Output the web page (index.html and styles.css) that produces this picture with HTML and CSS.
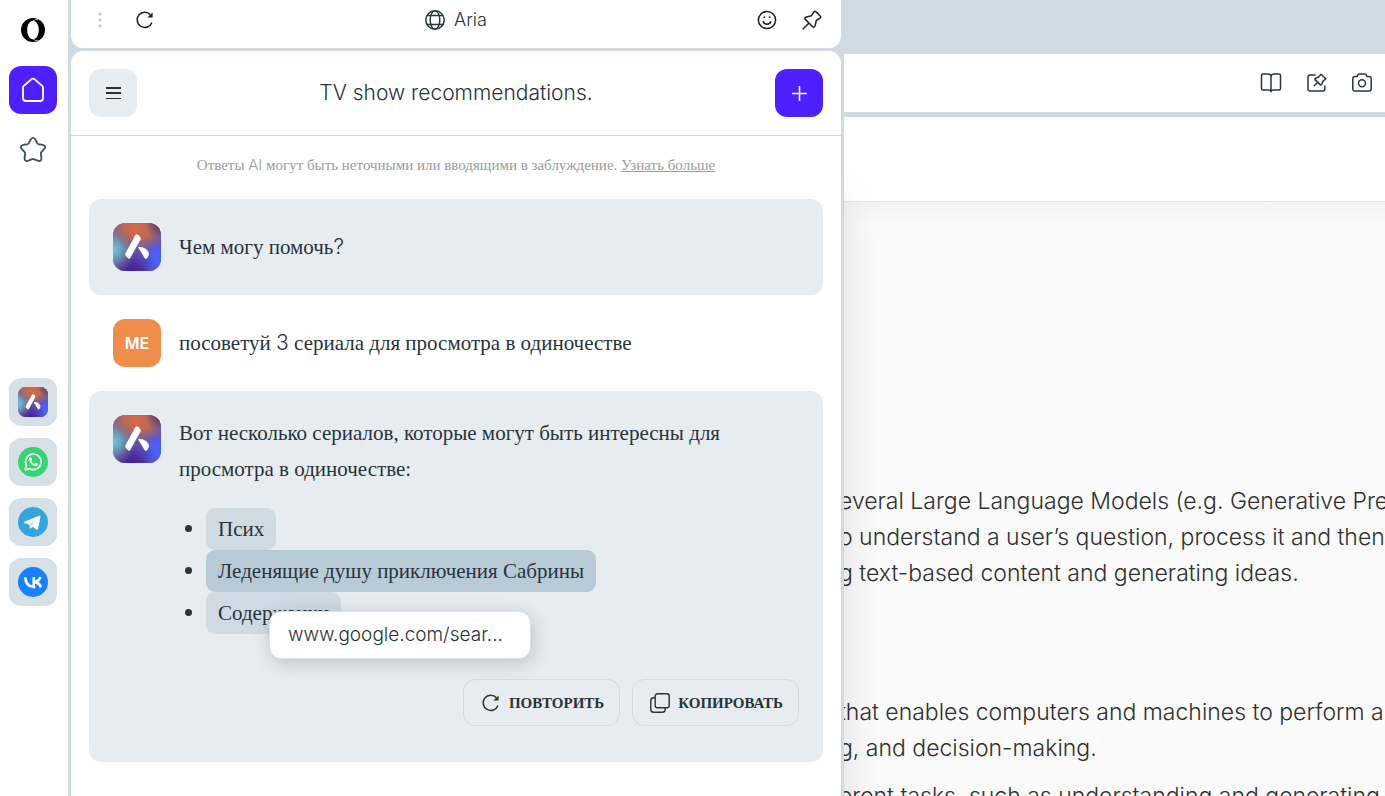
FILE: index.html
```html
<!DOCTYPE html>
<html lang="ru">
<head>
<meta charset="utf-8">
<title>Aria</title>
<link rel="stylesheet" href="styles.css">
</head>
<body>
<svg class="defs" width="0" height="0" aria-hidden="true">
  <defs>
    <radialGradient id="g-orange" gradientUnits="userSpaceOnUse" cx="0" cy="0" r="1" gradientTransform="translate(24 6) rotate(14) scale(29 21)"><stop offset="0" stop-color="#d26c45"/><stop offset=".45" stop-color="#c96a4b" stop-opacity=".88"/><stop offset="1" stop-color="#a0647a" stop-opacity="0"/></radialGradient>
    <radialGradient id="g-cyan" cx="0" cy="0.55" r="0.46"><stop offset="0" stop-color="#6fc8d8"/><stop offset=".35" stop-color="#6ab4cc" stop-opacity=".8"/><stop offset="1" stop-color="#6a90b8" stop-opacity="0"/></radialGradient>
    <radialGradient id="g-blue" cx="1" cy="0.85" r="0.75"><stop offset="0" stop-color="#4764ff"/><stop offset=".35" stop-color="#4e5cf2"/><stop offset="1" stop-color="#5a4ec0" stop-opacity="0"/></radialGradient>
    <radialGradient id="g-dark" cx="0.4" cy="1.02" r="0.55"><stop offset="0" stop-color="#40208c"/><stop offset=".4" stop-color="#47269f" stop-opacity=".75"/><stop offset="1" stop-color="#5a3c9c" stop-opacity="0"/></radialGradient>
    <radialGradient id="g-corner" cx="1" cy="0" r="0.35"><stop offset="0" stop-color="#4e3058"/><stop offset="1" stop-color="#5c3d60" stop-opacity="0"/></radialGradient>
    <symbol id="aria" viewBox="0 0 48 48">
      <rect width="48" height="48" rx="12" fill="#76608c"/>
      <rect width="48" height="48" rx="12" fill="url(#g-blue)"/>
      <rect width="48" height="48" rx="12" fill="url(#g-dark)"/>
      <rect width="48" height="48" rx="12" fill="url(#g-cyan)"/>
      <rect width="48" height="48" rx="12" fill="url(#g-orange)"/>
      <rect width="48" height="48" rx="12" fill="url(#g-corner)"/>
      <path d="M22.3 12.2Q23.5 10.6 25 11.8L27 13.7Q28.3 15 27.5 16.5L17.5 34.6Q16.3 36.8 14.8 35.1L12.7 32.8Q11.6 31.6 12.6 30Z" fill="#fff"/>
      <path d="M25 24.3Q30.5 23 34.6 27.8Q36 29.5 36 31Q36 31.8 34.7 34.3Q33.2 37 31.6 34.9Z" fill="#fff"/>
    </symbol>
    <symbol id="reload" viewBox="0 0 20 20">
      <path d="M16.9 12.4A7.6 7.6 0 1 1 15.4 4.7" fill="none" stroke="currentColor" stroke-width="1.5"/>
      <path d="M17.6 2.4V7.6H12.4Z" fill="currentColor"/>
    </symbol>
    <symbol id="pin" viewBox="0 0 20 20">
      <path d="M1.3 18.7L6.5 13.5M12.2 1.5Q13 .8 13.8 1.6L18.4 6.2Q19.2 7 18.4 7.8L14.3 10.5L13.1 15.6Q12.4 18.1 10.6 16.7L3.3 9.4Q2 7.8 4.4 7L9.4 5.7Z" fill="none" stroke="currentColor" stroke-width="1.5" stroke-linecap="round" stroke-linejoin="round"/>
    </symbol>
  </defs>
</svg>

<nav class="rail" aria-label="Боковая панель">
  <a class="opera" href="#" aria-label="Opera"><svg width="24" height="24" viewBox="0 0 24 24"><path fill-rule="evenodd" d="M12 0a12 12 0 1 0 0 24a12 12 0 1 0 0-24ZM12 2.8C15.3 2.8 17.8 6.8 17.8 12S15.3 21.2 12 21.2S6.2 17.2 6.2 12S8.7 2.8 12 2.8Z"/><path d="M12 2.8Q14.5.8 17.4 1.7M12 21.2Q14.5 23.2 17.4 22.3" fill="none" stroke="#aaa"/></svg></a>
  <a class="tile home" href="#" aria-label="Главная"><svg width="24" height="26" viewBox="0 0 24 26"><path d="M2 10.4Q2 9.6 2.8 8.8L10.5 2.1Q12 1 13.5 2.1L21.2 8.8Q22 9.6 22 10.4V21Q22 24 19 24H5Q2 24 2 21Z" fill="none" stroke="#fff" stroke-width="1.8"/></svg></a>
  <a class="tile star" href="#" aria-label="Закладки"><svg width="28" height="28" viewBox="0 0 28 28"><path d="M11.7 3.5Q14 .3 16.3 3.5L18.3 7.3Q18.7 8 19.5 8.2L23.9 8.9Q27.6 10 25.3 13L22.3 16.2Q21.8 16.8 21.9 17.6L22.4 22Q22.4 25.8 19.2 24.9L14.8 23.1Q14 22.8 13.2 23.1L8.8 24.9Q5.6 25.8 5.6 22L6.1 17.6Q6.2 16.8 5.7 16.2L2.7 13Q.4 10 4.1 8.9L8.5 8.2Q9.3 8 9.7 7.3Z" fill="none" stroke="#48545c" stroke-width="1.9"/></svg></a>
  <div class="apps">
    <a class="tile app" href="#" aria-label="Aria"><svg width="30" height="30"><use href="#aria"/></svg></a>
    <a class="tile app" href="#" aria-label="WhatsApp"><svg width="30" height="30" viewBox="0 0 30 30"><circle cx="15" cy="15" r="15" fill="#35d671"/><path d="M7.2 22.9L8.5 18.5A7.8 7.8 0 1 1 11.7 21.7Z" fill="none" stroke="#fff" stroke-width="1.6" stroke-linejoin="round"/><path d="M11.8 10.6Q12.8 9.9 13.3 11L13.9 12.5Q13.9 13 13.1 13.8Q14.2 16 16.4 16.9L17.5 15.8Q18 15.5 18.5 15.9L19.8 16.6Q20.3 17 19.7 18.1Q18.6 19.5 16.7 18.9Q12.9 17.8 11.2 14Q10.5 12 11.8 10.6Z" fill="#fff"/></svg></a>
    <a class="tile app" href="#" aria-label="Telegram"><svg width="30" height="30" viewBox="0 0 30 30"><circle cx="15" cy="15" r="15" fill="#34a5dd"/><path d="M6.2 14.7L21.2 8.8Q22.6 8.5 22.4 10L20 22Q19.6 23.4 18.3 22.5L14.5 19.7L12.6 21.6Q11.8 22 11.8 21L11.4 17.7L6.3 16.1Q5.2 15.5 6.2 14.7Z" fill="#fff"/><path d="M11.6 17.6L18.6 12.2L13.6 18.1L12.4 20.8Z" fill="#bfe0ef"/></svg></a>
    <a class="tile app" href="#" aria-label="VK"><svg width="30" height="30" viewBox="0 0 30 30"><circle cx="15" cy="15" r="15" fill="#1782ff"/><path d="M7.3 10.2Q7.6 19.6 15.8 20V10.2M15.8 15.1Q20.8 14.8 22.3 10.2M16.3 15.1Q21.3 15.4 22.9 20.2" fill="none" stroke="#fff" stroke-width="2.7"/></svg></a>
  </div>
</nav>

<main class="panel">
  <header class="bar">
    <button class="icon dots" aria-label="Меню панели"><svg width="4" height="16" viewBox="0 0 4 16" fill="#c4c8cb"><circle cx="2" cy="2" r="1.6"/><circle cx="2" cy="8" r="1.6"/><circle cx="2" cy="14" r="1.6"/></svg></button>
    <button class="icon" aria-label="Обновить"><svg width="20" height="20"><use href="#reload"/></svg></button>
    <div class="name"><svg width="20" height="20" viewBox="0 0 20 20" fill="none" stroke="#2b3740" stroke-width="1.5"><circle cx="10" cy="10" r="9.2"/><ellipse cx="10" cy="10" rx="4.8" ry="9.2"/><path d="M2 5.5H18M1 14.5H19"/></svg><span>Aria</span></div>
    <button class="icon" aria-label="Эмодзи"><svg width="20" height="20" viewBox="0 0 20 20" fill="none" stroke="currentColor" stroke-width="1.5"><circle cx="10" cy="10" r="8.6"/><path d="M6 11.2Q7 14.2 10 14.2T14 11.2"/><circle cx="7.4" cy="7.2" r=".9" fill="currentColor" stroke="none"/><circle cx="12.6" cy="7.2" r=".9" fill="currentColor" stroke="none"/></svg></button>
    <button class="icon" aria-label="Закрепить"><svg width="20" height="20"><use href="#pin"/></svg></button>
  </header>

  <section class="chat">
    <header class="chat-head">
      <button class="square menu" aria-label="Меню"><svg width="16" height="14" viewBox="0 0 16 14"><path d="M1 2H16M1 7H16" stroke="#26323a" stroke-width="2"/><path d="M1 12.5H16" stroke="#26323a"/></svg></button>
      <h1>TV show recommendations.</h1>
      <button class="square add" aria-label="Новый чат"><svg width="16" height="16" viewBox="0 0 16 16"><path d="M8.5 1V16M1 8.5H16" stroke="#fff" stroke-width="1.6"/></svg></button>
    </header>
    <p class="note">Ответы <span class="latin">AI</span> могут быть неточными или вводящими в заблуждение. <a href="#">Узнать больше</a></p>

    <article class="message shaded">
      <svg class="avatar" width="48" height="48"><use href="#aria"/></svg>
      <div class="body"><p class="single">Чем могу помочь<span class="latin">?</span></p></div>
    </article>
    <article class="message">
      <span class="avatar me">ME</span>
      <div class="body"><p class="single">посоветуй <span class="latin">3</span> сериала для просмотра в одиночестве</p></div>
    </article>
    <article class="message shaded answer">
      <svg class="avatar" width="48" height="48"><use href="#aria"/></svg>
      <div class="body">
        <p>Вот несколько сериалов, которые могут быть интересны для просмотра в одиночестве:</p>
        <ul>
          <li><a href="#">Псих</a></li>
          <li class="hovered"><a href="#">Леденящие душу приключения Сабрины</a><span class="tip" role="tooltip">www.google.com/sear...</span></li>
          <li><a href="#">Содержанки</a></li>
        </ul>
        <div class="actions">
          <button><svg width="20" height="20"><use href="#reload"/></svg>ПОВТОРИТЬ</button>
          <button><svg width="20" height="20" viewBox="0 0 20 20" fill="none" stroke="currentColor" stroke-width="1.4"><rect x="5.2" y=".8" width="14" height="14" rx="2.2"/><path d="M5 4.8H3.6Q.8 5 .8 7.6V16.4Q.8 19.2 3.6 19.2H12.4Q15.2 19 15.2 16.4V15"/></svg>КОПИРОВАТЬ</button>
        </div>
      </div>
    </article>
  </section>
</main>

<section class="page">
  <div class="toolbar">
    <button class="icon" aria-label="Режим чтения"><svg width="22" height="20" viewBox="0 0 22 20" fill="none" stroke="currentColor" stroke-width="1.5" stroke-linejoin="round"><path d="M11 3Q10.5 1 8 1H3Q1.5 1 1.5 2.5V15.5Q1.5 17 3 17H8.5Q10.6 17 11 18.7Q11.4 17 13.5 17H19Q20.5 17 20.5 15.5V2.5Q20.5 1 19 1H14Q11.5 1 11 3V18.5"/></svg></button>
    <button class="icon" aria-label="Pinboards"><svg width="20" height="20" viewBox="0 0 20 20" fill="none" stroke="currentColor" stroke-width="1.5" stroke-linecap="round" stroke-linejoin="round"><path d="M8 2H3Q1 2 1 4V16Q1 18 3 18H15.8Q17.8 18 17.8 16V13M7.2 12.8L10 10M14 1.2L18.8 5.8L15.8 8.4L14.8 11.4Q14 12.4 13.2 11.6L8 6.6Q7.6 5.7 8.6 5.2L11.4 4.2Z"/></svg></button>
    <button class="icon" aria-label="Снимок экрана"><svg width="20" height="20" viewBox="0 0 20 20" fill="none" stroke="currentColor" stroke-width="1.5"><path d="M3 3.5H5L6 1.7Q6.4 1 7.4 1H12.6Q13.6 1 14 1.7L15 3.5H17Q19.2 3.5 19.2 5.7V15.8Q19.2 18 17 18H3Q.8 18 .8 15.8V5.7Q.8 3.5 3 3.5Z"/><circle cx="10" cy="10.3" r="3.5"/></svg></button>
  </div>
  <div class="site">
    <div class="site-head"></div>
    <div class="text" lang="en">
      <p>everal Large Language Models (e.g. Generative Pre<br>o understand a user’s question, process it and then<br>g text-based content and generating ideas.</p>
      <p class="later">that enables computers and machines to perform a<br>g, and decision-making.</p>
      <p>erent tasks, such as understanding and generating</p>
    </div>
  </div>
</section>
</body>
</html>
```

FILE: styles.css
```css
* { box-sizing: border-box; }

body {
  margin: 0;
  height: 100vh;
  display: flex;
  overflow: hidden;
  background: #d0dae2;
  color: #28333b;
  font-family: "Liberation Serif", serif;
}

h1, p, ul { margin: 0; }
button { padding: 0; border: 0; background: none; color: inherit; font: inherit; }
svg { display: block; flex: none; }
.defs { position: absolute; }

.rail {
  position: relative;
  z-index: 2;
  flex: none;
  width: 68px;
  display: flex;
  flex-direction: column;
  align-items: center;
  padding: 18px 10px 0 8px;
  background: #fff;
}
.tile {
  width: 48px;
  height: 48px;
  border-radius: 12px;
  display: grid;
  place-items: center;
}
.home { margin-top: 24px; background: #4e1fff; }
.star { margin-top: 12px; }
.apps {
  margin-top: 204px;
  display: grid;
  gap: 12px;
}
.app { background: #d6e0e6; }

.panel {
  position: relative;
  z-index: 1;
  flex: none;
  width: 776px;
  padding: 0 3px;
  display: flex;
  flex-direction: column;
  gap: 3px;
  background: #d0dae2;
  box-shadow: 0 200px 36px rgba(0, 0, 0, .12);
}
.bar {
  height: 48px;
  flex: none;
  display: flex;
  align-items: center;
  padding: 0 19px;
  padding-bottom: 8px;
  gap: 25px;
  border-radius: 0 0 12px 12px;
  background: #fff;
}
.icon { display: grid; place-items: center; color: #1c2226; }
.dots { width: 20px; }
.name {
  flex: 1;
  display: flex;
  justify-content: center;
  align-items: center;
  gap: 9px;
  font: 300 18px/24px Inter, sans-serif;
}
.chat {
  flex: 1;
  border-radius: 12px 12px 0 0;
  background: #fff;
}
.chat-head {
  display: flex;
  align-items: center;
  justify-content: space-between;
  padding: 18px;
  border-bottom: 1px solid #d0dae2;
}
.chat-head h1 { font: 300 21px/28px Inter, sans-serif; }
.square {
  width: 48px;
  height: 48px;
  border-radius: 12px;
  display: grid;
  place-items: center;
}
.menu { background: #e7ecf0; }
.add { background: #4e1fff; }

.note {
  padding: 17px 0 22px;
  text-align: center;
  font-size: 15px;
  line-height: 24px;
  color: #999c9f;
}
.note a { color: inherit; }
.latin { font-family: Inter, sans-serif; font-weight: 300; }

.message {
  display: flex;
  gap: 18px;
  margin: 0 18px;
  padding: 24px;
  border-radius: 12px;
}
.shaded { background: #e7ecf0; }
.answer { padding-bottom: 36px; }
.avatar { width: 48px; height: 48px; flex: none; }
.me {
  display: grid;
  place-items: center;
  border-radius: 12px;
  background: #ef8e4c;
  color: #fff;
  font: 600 16px/24px Inter, sans-serif;
}
.body {
  flex: 1;
  font-size: 21px;
  line-height: 36px;
}
.single { padding: 6px 0; }
.body ul { margin: 21px 0 45px; padding: 0 0 0 27px; list-style: none; }
.body li { position: relative; height: 42px; }
.body li::before {
  content: "";
  position: absolute;
  left: -21px;
  top: 17px;
  width: 7px;
  height: 7px;
  border-radius: 50%;
  background: #28333b;
}
.body li a {
  display: inline-block;
  padding: 3px 12px;
  border-radius: 9px;
  background: #d0dae2;
  color: inherit;
  text-decoration: none;
}
.body .hovered { z-index: 1; }
.body .hovered a { background: #b9cad7; }
.tip {
  position: absolute;
  left: 63px;
  top: 61px;
  width: 262px;
  padding: 6px 18px;
  border: 1px solid #d9e2e9;
  border-radius: 12px;
  background: #fff;
  box-shadow: 2px 4px 18px rgba(40, 51, 59, .22);
  font: 300 19px/34px Inter, sans-serif;
}
.actions {
  display: flex;
  justify-content: flex-end;
  gap: 12px;
}
.actions button {
  height: 47px;
  display: flex;
  align-items: center;
  gap: 8px;
  padding: 0 15px 0 17px;
  border: 1px solid #d0dae0;
  border-radius: 12px;
  font-size: 15px;
  font-weight: 700;
}

.page {
  flex: 1;
  min-width: 0;
  padding-top: 54px;
  display: flex;
  flex-direction: column;
  gap: 5px;
}
.toolbar {
  height: 58px;
  flex: none;
  display: flex;
  justify-content: flex-end;
  align-items: center;
  gap: 25px;
  padding-right: 13px;
  background: #fff;
}
.toolbar .icon { color: #2b3740; }
.site {
  flex: 1;
  min-height: 0;
  overflow: hidden;
  background: linear-gradient(#f2f2f2, #fafafa 24px) 0 84px no-repeat #fafafa;
}
.site-head {
  height: 85px;
  border-bottom: 1px solid #e6e6e6;
  background: #fff;
}
.text {
  margin-left: -5px;
  padding-top: 281px;
  display: grid;
  gap: 12px;
  white-space: nowrap;
  color: #303030;
  font: 300 23px/36px Inter, sans-serif;
}
.later { margin-top: 91px; }
```
